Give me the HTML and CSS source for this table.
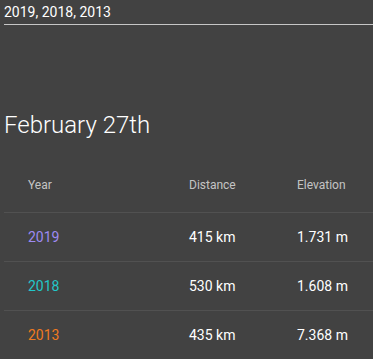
FILE: index.html
```html
<!DOCTYPE html>
<html>
<head>
<meta charset="utf-8">
<link rel="stylesheet" href="styles.css">
</head>
<body>
<div class="page">
  <div class="select">
    <div class="select-value">2019, 2018, 2013</div>
  </div>
  <h2 class="title">February 27th</h2>
  <table class="table">
    <colgroup>
      <col class="c-year">
      <col class="c-dist">
      <col class="c-elev">
    </colgroup>
    <thead>
      <tr class="head-row">
        <th>Year</th>
        <th>Distance</th>
        <th>Elevation</th>
      </tr>
    </thead>
    <tbody>
      <tr class="row">
        <td class="y2019">2019</td>
        <td>415 km</td>
        <td>1.731 m</td>
      </tr>
      <tr class="row">
        <td class="y2018">2018</td>
        <td>530 km</td>
        <td>1.608 m</td>
      </tr>
      <tr class="row">
        <td class="y2013">2013</td>
        <td>435 km</td>
        <td>7.368 m</td>
      </tr>
    </tbody>
  </table>
</div>
</body>
</html>
```

FILE: styles.css
```css
html, body {
  margin: 0;
  padding: 0;
  background: #424242;
}
body {
  font-family: Roboto, "Liberation Sans", sans-serif;
  color: #fff;
}
.page {
  padding-left: 4px;
}
.select {
  border-bottom: 1px solid rgba(255, 255, 255, 0.7);
  padding: 4px 0 4px 0;
}
.select-value {
  font-size: 14px;
  line-height: 16px;
  color: #fff;
}
.title {
  margin: 0;
  padding-top: 85px;
  font-size: 24px;
  font-weight: 300;
  line-height: 30px;
  color: #fff;
}
.table {
  width: 100%;
  border-collapse: collapse;
  table-layout: fixed;
  margin-top: 17px;
}
.c-year { width: 161px; }
.c-dist { width: 108px; }
.table th,
.table td {
  text-align: left;
  padding: 4px 0 4px 24px;
  border-bottom: 1px solid #515151;
  white-space: nowrap;
}
.table th {
  font-size: 12px;
  font-weight: 400;
  color: rgba(255, 255, 255, 0.7);
  height: 47px;
}
.table td {
  font-size: 14px;
  color: #fff;
  height: 40px;
}
.y2019 { color: #9d8af2 !important; }
.y2018 { color: #22c7c9 !important; }
.y2013 { color: #f07a20 !important; }
```
